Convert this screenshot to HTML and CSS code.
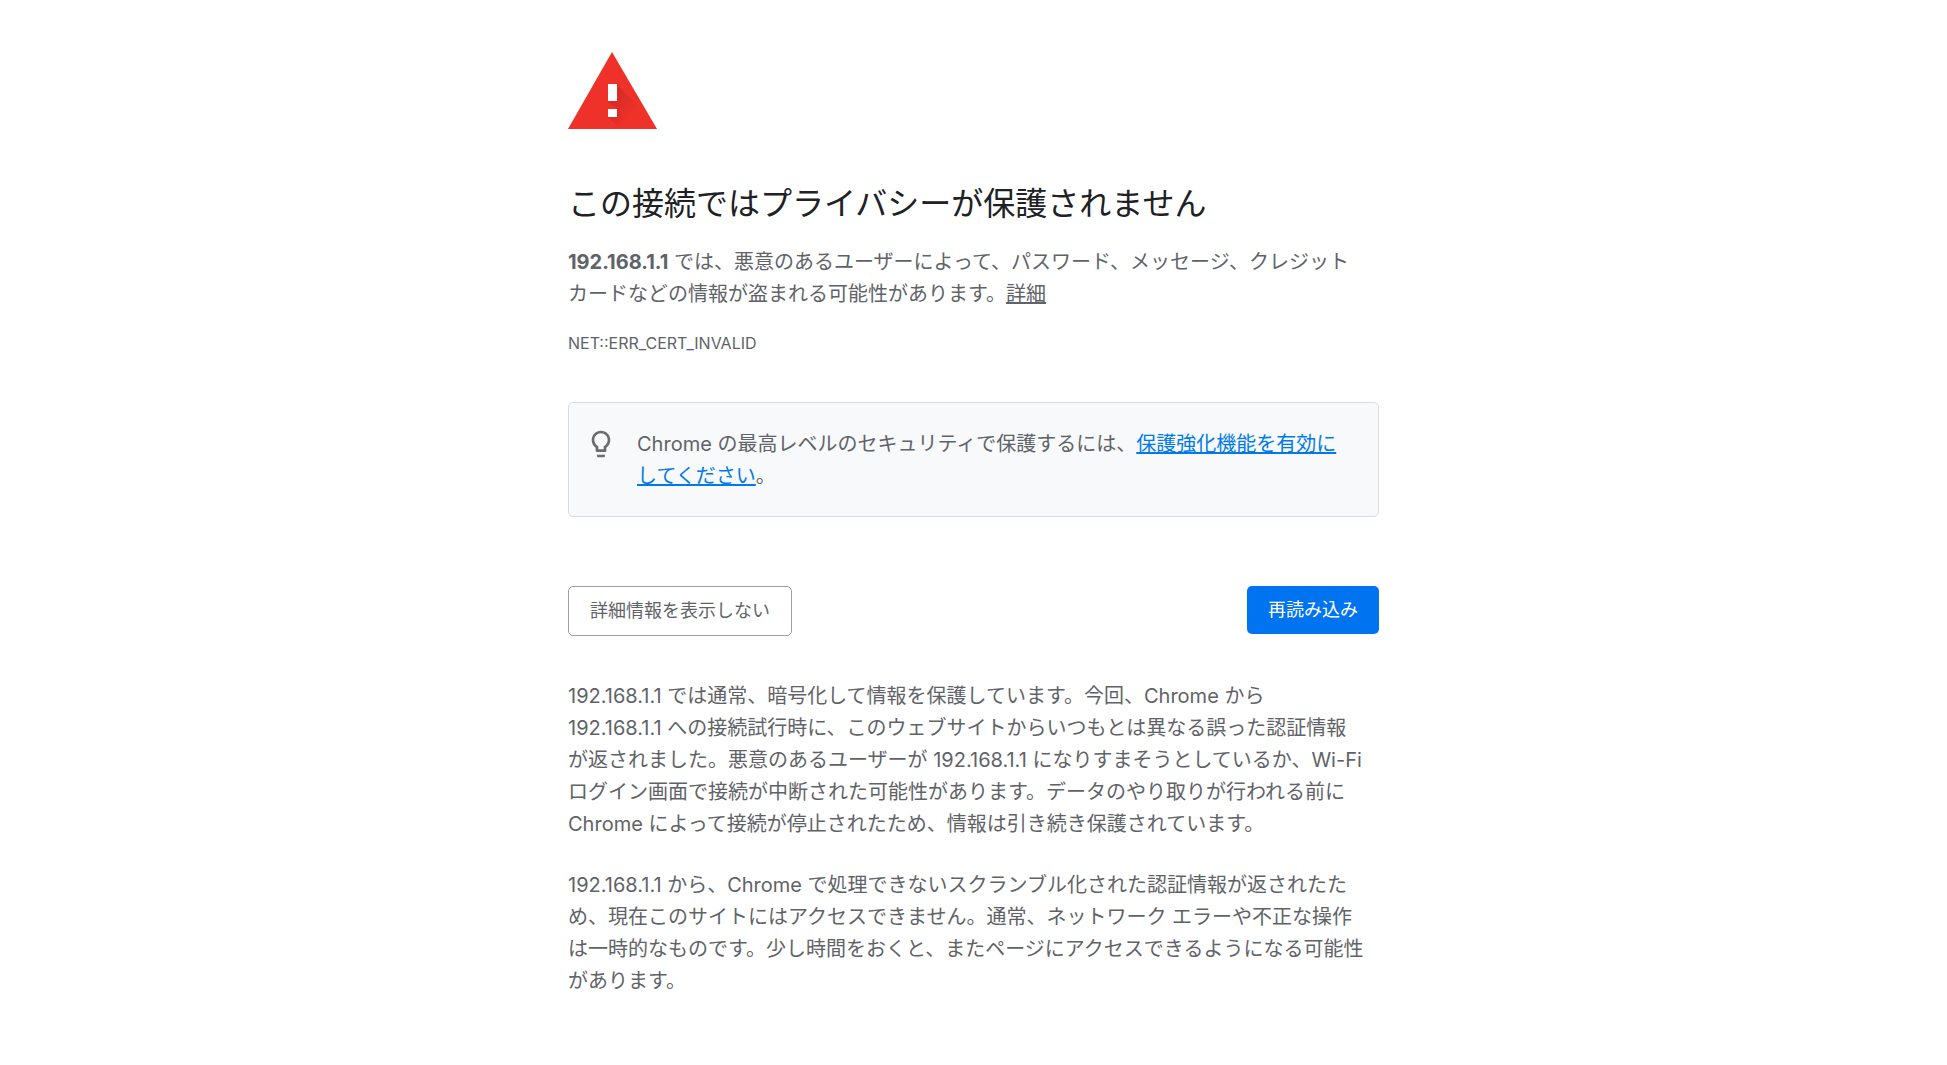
FILE: index.html
```html
<!DOCTYPE html>
<html lang="ja">
<head>
    <meta charset="UTF-8">
    <meta name="viewport" content="width=device-width, initial-scale=1.0">
    <title>プライバシー エラー</title>
    <link rel="stylesheet" href="styles.css">
</head>
<body>
    <main class="interstitial">
        <svg class="warning-icon" viewBox="0 0 90 77" aria-hidden="true">
            <defs>
                <linearGradient id="shade" gradientUnits="userSpaceOnUse" x1="44" y1="42" x2="64" y2="62">
                    <stop offset="0" stop-color="#d42a25"/>
                    <stop offset="1" stop-color="#ee3129"/>
                </linearGradient>
                <linearGradient id="shade-dot" gradientUnits="userSpaceOnUse" x1="44" y1="60" x2="56" y2="72">
                    <stop offset="0" stop-color="#d42a25"/>
                    <stop offset="1" stop-color="#ee3129"/>
                </linearGradient>
            </defs>
            <path fill="#ee3129" d="M44 0 89 77H0z"/>
            <path fill="url(#shade)" d="M48 32 76 60 68 76 40 49h8z"/>
            <path fill="url(#shade-dot)" d="M48 57 68 77H52L40 65z"/>
            <path fill="#fff" d="M40 32h9v17h-9zM40 57h9v8h-9z"/>
        </svg>

        <h1>この接続ではプライバシーが保護されません</h1>
        <p class="summary"><strong>192.168.1.1</strong> では、悪意のあるユーザーによって、パスワード、メッセージ、クレジット<br>カードなどの情報が盗まれる可能性があります。<a class="learn-more" href="#">詳細</a></p>
        <p class="error-code">NET::ERR_CERT_INVALID</p>

        <div class="promo">
            <svg class="bulb-icon" viewBox="0 0 24 24" aria-hidden="true">
                <path fill="#6b6c6e" d="M9 21c0 .55.45 1 1 1h4c.55 0 1-.45 1-1v-1H9v1zm3-19C8.14 2 5 5.14 5 9c0 2.38 1.19 4.47 3 5.74V17c0 .55.45 1 1 1h6c.55 0 1-.45 1-1v-2.26c1.81-1.27 3-3.36 3-5.74 0-3.86-3.14-7-7-7zm2.85 11.1l-.85.6V16h-4v-2.3l-.85-.6C7.8 12.16 7 10.63 7 9c0-2.76 2.24-5 5-5s5 2.24 5 5c0 1.63-.8 3.16-2.15 4.1z"/>
            </svg>
            <p>Chrome の最高レベルのセキュリティで保護するには、<a href="#">保護強化機能を有効に<br>してください</a>。</p>
        </div>

        <div class="buttons">
            <button type="button" class="details-button" aria-controls="details" aria-expanded="true">詳細情報を表示しない</button>
            <button type="button" class="reload-button">再読み込み</button>
        </div>

        <div class="details" id="details">
            <p>192.168.1.1 では通常、暗号化して情報を保護しています。今回、Chrome から<br>192.168.1.1 への接続試行時に、このウェブサイトからいつもとは異なる誤った認証情報<br>が返されました。悪意のあるユーザーが 192.168.1.1 になりすまそうとしているか、Wi-Fi<br>ログイン画面で接続が中断された可能性があります。データのやり取りが行われる前に<br>Chrome によって接続が停止されたため、情報は引き続き保護されています。</p>
            <p>192.168.1.1 から、Chrome で処理できないスクランブル化された認証情報が返されたた<br>め、現在このサイトにはアクセスできません。通常、ネットワーク エラーや不正な操作<br>は一時的なものです。少し時間をおくと、またページにアクセスできるようになる可能性<br>があります。</p>
        </div>
    </main>
</body>
</html>
```
FILE: styles.css
```css
* {
    box-sizing: border-box;
}
body {
    margin: 0;
    background-color: #fff;
    color: #5f6368;
    font-family: Inter, "Noto Sans CJK JP", sans-serif;
    font-size: 20px;
    line-height: 32px;
}
p {
    margin: 0;
}
a {
    text-decoration-thickness: 2px;
}
.interstitial {
    max-width: 811px;
    margin: 0 auto;
    padding: 52px 0;
}
.warning-icon {
    display: block;
    width: 90px;
    height: 77px;
}
h1 {
    margin: 56px 0 23px;
    color: #202124;
    font-size: 32px;
    font-weight: 400;
    line-height: 38px;
}
.learn-more {
    color: inherit;
}
.error-code {
    margin-top: 23px;
    font-size: 16px;
    line-height: 20px;
}
.promo {
    display: flex;
    gap: 20px;
    margin-top: 49px;
    padding: 25px 16px 24px;
    border: 1px solid #dadce0;
    border-radius: 5px;
    background-color: #f8f9fb;
}
.promo a {
    color: #007aeb;
}
.bulb-icon {
    flex: none;
    width: 32px;
    height: 32px;
}
.buttons {
    display: flex;
    justify-content: space-between;
    align-items: flex-start;
    margin-top: 69px;
}
button {
    padding: 12px 21px;
    border: none;
    border-radius: 5px;
    font-family: inherit;
    font-size: 18px;
    line-height: 24px;
    cursor: pointer;
}
.details-button {
    border: 1px solid #9aa0a6;
    background-color: #fff;
    color: #5f6368;
}
.reload-button {
    background-color: #0073f0;
    color: #fff;
}
.details {
    margin-top: 44px;
}
.details p + p {
    margin-top: 29px;
}
```
